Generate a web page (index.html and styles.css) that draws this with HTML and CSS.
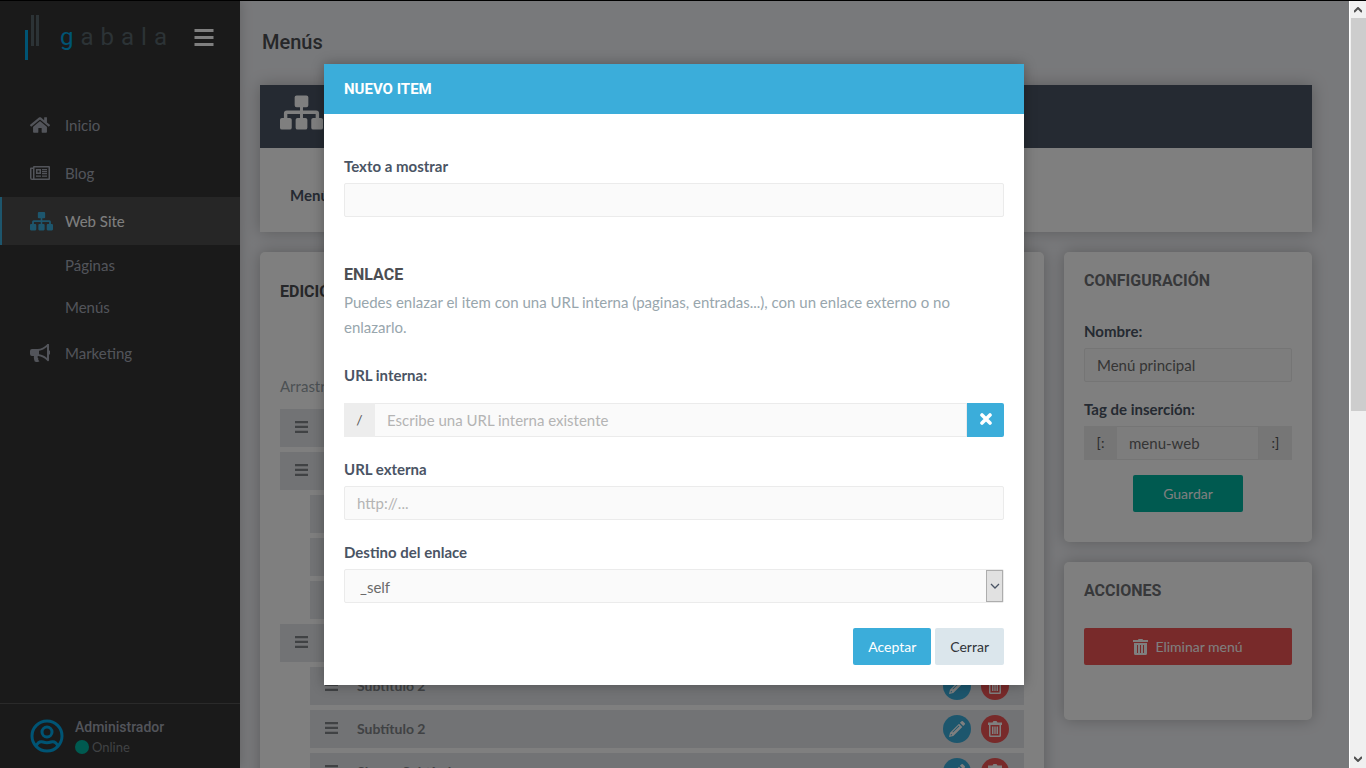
FILE: index.html
```html
<!DOCTYPE html>
<html lang="es">
<head>
  <meta charset="UTF-8">
  <meta name="viewport" content="width=device-width, initial-scale=1.0">
  <title>Gabala - Menús</title>
  <link rel="stylesheet" href="styles.css">
</head>
<body>

<!-- Iconos -->
<svg class="sprite" width="0" height="0">
  <symbol id="i-bars" viewBox="0 0 20 17"><path d="M.5 0h19v3H.5zM.5 7h19v3H.5zM.5 14h19v3H.5z"/></symbol>
  <symbol id="i-drag" viewBox="0 0 13 12"><path d="M0 0h13v2.300H0zM0 4.800h13v2.300H0zM0 9.700h13V12H0z"/></symbol>
  <symbol id="i-home" viewBox="0 0 576 512"><path d="M488 312.700V456c0 13.300-10.700 24-24 24H348c-6.600 0-12-5.400-12-12V356c0-6.600-5.400-12-12-12h-72c-6.600 0-12 5.400-12 12v112c0 6.600-5.400 12-12 12H112c-13.300 0-24-10.700-24-24V312.700c0-3.600 1.600-7 4.400-9.300l188-154.800c4.400-3.600 10.800-3.600 15.300 0l188 154.800c2.700 2.300 4.300 5.700 4.300 9.300zM571.600 251.500L488 182.600V44.100c0-6.600-5.400-12-12-12h-56c-6.600 0-12 5.400-12 12v72.600l-89.500-73.700c-17.700-14.600-43.300-14.600-61 0L4.400 251.500c-5.100 4.200-5.800 11.800-1.600 16.900l25.500 31c4.200 5.100 11.800 5.800 16.900 1.600l235.200-193.700c4.400-3.600 10.800-3.600 15.300 0L530.900 301c5.100 4.200 12.700 3.500 16.900-1.600l25.500-31c4.200-5.200 3.400-12.700-1.700-16.900z"/></symbol>
  <symbol id="i-news" viewBox="0 0 20 14"><path fill-rule="evenodd" d="M4 0h15a1 1 0 0 1 1 1v12a1 1 0 0 1-1 1H2a2 2 0 0 1-2-2V2.500a1 1 0 0 1 1-1h2V1a1 1 0 0 1 1-1zM4.500 1.500v11h14v-11zM1.500 3v9a.7.7 0 0 0 1.500 0V3zM6 3h5v5H6zM7.500 4.500v2h2v-2zM12 3h5v1.300h-5zM12 5h5v1.300h-5zM12 7h5v1.300h-5zM6 9.500h5v1.300H6zM12 9.500h5v1.300h-5z"/></symbol>
  <symbol id="i-sitemap" viewBox="0 0 44 36"><path d="M17 0h10a2 2 0 0 1 2 2v8a2 2 0 0 1-2 2h-3.500v3.500H37a3 3 0 0 1 3 3V23h2a2 2 0 0 1 2 2v8a2 2 0 0 1-2 2h-8a2 2 0 0 1-2-2v-8a2 2 0 0 1 2-2h2.500v-4h-13v4H26a2 2 0 0 1 2 2v8a2 2 0 0 1-2 2h-8a2 2 0 0 1-2-2v-8a2 2 0 0 1 2-2h2.500v-4h-13v4H10a2 2 0 0 1 2 2v8a2 2 0 0 1-2 2H2a2 2 0 0 1-2-2v-8a2 2 0 0 1 2-2h2v-4.500a3 3 0 0 1 3-3h13.500V12H17a2 2 0 0 1-2-2V2a2 2 0 0 1 2-2z"/></symbol>
  <symbol id="i-horn" viewBox="0 0 20 18"><path fill-rule="evenodd" d="M17 .5a1 1 0 0 1 2 .5v5.500a2 2 0 0 1 0 4V16a1 1 0 0 1-2 .5C14.500 14 11.500 12.500 8 12c-1 1 0 2 .5 2.700-.8 1 0 1.700 1 2.500C8 18.300 6 18.200 4.700 17.500 4.200 15.800 3.500 14 4 12H2a2 2 0 0 1-2-2V7a2 2 0 0 1 2-2h5.500C11 5 14.500 3 17 .5zM17 3c-2.500 2-5 3.300-8 3.700v3.600c3 .4 5.500 1.700 8 3.700z"/></symbol>
  <symbol id="i-user" viewBox="0 0 34 34"><g fill="none" stroke="currentColor" stroke-width="3"><circle cx="17" cy="17" r="15"/><circle cx="17" cy="13" r="5"/><path d="M6 27c2-4 4-5 7-4 3 1 5 1 8 0s5 0 7 4"/></g></symbol>
  <symbol id="i-pencil" viewBox="0 0 16 16"><path fill-rule="evenodd" d="M12.300.4a1.300 1.300 0 0 1 1.800 0l1.500 1.500a1.300 1.300 0 0 1 0 1.800l-1.400 1.400-3.300-3.300zM10 2.700l3.300 3.300-9 9L0 16l1-4.300zM2 12.700l-.4 1.700 1.700-.4zM9.800 4.600L3.400 11l.6.600 6.400-6.400z"/></symbol>
  <symbol id="i-trash" viewBox="0 0 14 16"><path fill-rule="evenodd" d="M4.500 1.500L5.500 0h3l1 1.500H14V4h-1v10.500a1.500 1.500 0 0 1-1.500 1.500h-9A1.500 1.500 0 0 1 1 14.500V4H0V1.500zM2.500 4v10.500h9V4zM4 5.500h1.500V13H4zM6.300 5.500h1.400V13H6.300zM8.500 5.500H10V13H8.500z"/></symbol>
  <symbol id="i-bin" viewBox="0 0 15 16"><path fill-rule="evenodd" d="M5 1l.5-1h4l.5 1h5v2H0V1zM1 4h13v10.500a1.500 1.500 0 0 1-1.500 1.500h-10A1.500 1.500 0 0 1 1 14.500zM4 6v8h1V6zM7 6v8h1V6zM10 6v8h1V6z"/></symbol>
  <symbol id="i-times" viewBox="0 0 12 12"><path d="M2 2l8 8M10 2l-8 8" fill="none" stroke="currentColor" stroke-width="3.600" stroke-linecap="round"/></symbol>
  <symbol id="i-down" viewBox="0 0 10 6"><path d="M1 1l4 4 4-4" fill="none" stroke="currentColor" stroke-width="1.300"/></symbol>
  <symbol id="i-arrow" viewBox="0 0 8 6"><path d="M0 5l4-4 4 4" fill="none" stroke="currentColor" stroke-width="2"/></symbol>
</svg>

<div class="window">
  <div class="app">

    <aside class="sidebar">
      <div class="brand">
        <a href="#" class="logo" aria-label="gabala">
          <svg width="14" height="45" viewBox="0 0 14 45"><path class="logo-blue" d="M0 15h3v30H0z"/><path class="logo-gray" d="M6 0h3v31H6zM11 0h3v31h-3z"/></svg>
          <span class="wordmark"><b>g</b><i>a</i><i>b</i><i>a</i><i>l</i><i>a</i></span>
        </a>
        <button class="toggle" type="button" aria-label="Menú"><svg width="20" height="17"><use href="#i-bars"/></svg></button>
      </div>

      <nav class="nav">
        <a href="#"><svg width="20" height="18"><use href="#i-home"/></svg>Inicio</a>
        <a href="#"><svg width="21" height="14"><use href="#i-news"/></svg>Blog</a>
        <a href="#" class="active"><svg width="23" height="19"><use href="#i-sitemap"/></svg>Web Site</a>
        <div class="subnav">
          <a href="#">Páginas</a>
          <a href="#">Menús</a>
        </div>
        <a href="#"><svg width="20" height="18"><use href="#i-horn"/></svg>Marketing</a>
      </nav>

      <div class="user">
        <svg width="34" height="34"><use href="#i-user"/></svg>
        <div>
          <div class="user-name">Administrador</div>
          <div class="user-status"><span class="dot"></span>Online</div>
        </div>
      </div>
    </aside>

    <main class="content">
      <h1>Menús</h1>

      <section class="panel">
        <div class="panel-head"><svg width="43" height="36"><use href="#i-sitemap"/></svg></div>
        <div class="panel-body">Menú</div>
      </section>

      <div class="columns">
        <section class="card editor">
          <h2>Edición</h2>
          <p class="hint">Arrastra</p>
          <ul class="items">
            <li><svg width="13" height="12"><use href="#i-drag"/></svg></li>
            <li><svg width="13" height="12"><use href="#i-drag"/></svg></li>
            <li class="child"></li>
            <li class="child"></li>
            <li class="child"></li>
            <li><svg width="13" height="12"><use href="#i-drag"/></svg></li>
            <li class="child">
              <svg width="13" height="12"><use href="#i-drag"/></svg><span>Subtítulo 2</span>
              <button class="round edit" type="button" aria-label="Editar"><svg width="16" height="16"><use href="#i-pencil"/></svg></button>
              <button class="round delete" type="button" aria-label="Eliminar"><svg width="14" height="16"><use href="#i-trash"/></svg></button>
            </li>
            <li class="child">
              <svg width="13" height="12"><use href="#i-drag"/></svg><span>Subtítulo 2</span>
              <button class="round edit" type="button" aria-label="Editar"><svg width="16" height="16"><use href="#i-pencil"/></svg></button>
              <button class="round delete" type="button" aria-label="Eliminar"><svg width="14" height="16"><use href="#i-trash"/></svg></button>
            </li>
            <li class="child">
              <svg width="13" height="12"><use href="#i-drag"/></svg><span>Siguen Subtítulo</span>
              <button class="round edit" type="button" aria-label="Editar"><svg width="16" height="16"><use href="#i-pencil"/></svg></button>
              <button class="round delete" type="button" aria-label="Eliminar"><svg width="14" height="16"><use href="#i-trash"/></svg></button>
            </li>
          </ul>
        </section>

        <div class="side">
          <section class="card config">
            <h2>Configuración</h2>
            <label for="nombre">Nombre:</label>
            <input type="text" id="nombre" value="Menú principal">
            <label for="tag">Tag de inserción:</label>
            <div class="group">
              <span class="addon">[:</span>
              <input type="text" id="tag" value="menu-web">
              <span class="addon">:]</span>
            </div>
            <button class="btn save" type="button">Guardar</button>
          </section>

          <section class="card actions">
            <h2>Acciones</h2>
            <button class="btn danger" type="button"><svg width="15" height="16"><use href="#i-bin"/></svg>Eliminar menú</button>
          </section>
        </div>
      </div>
    </main>

    <div class="overlay">
      <form class="modal" role="dialog" aria-labelledby="modalTitle">
        <h2 class="modal-head" id="modalTitle">Nuevo item</h2>
        <div class="modal-body">
          <label for="texto">Texto a mostrar</label>
          <input type="text" id="texto">

          <h3>Enlace</h3>
          <p>Puedes enlazar el item con una URL interna (paginas, entradas...), con un enlace externo o no enlazarlo.</p>

          <label for="interna">URL interna:</label>
          <div class="group url">
            <span class="addon">/</span>
            <input type="text" id="interna" placeholder="Escribe una URL interna existente">
            <button class="clear" type="button" aria-label="Borrar"><svg width="12" height="12"><use href="#i-times"/></svg></button>
          </div>

          <label for="externa">URL externa</label>
          <input type="text" id="externa" placeholder="http://...">

          <label for="destino">Destino del enlace</label>
          <div class="select">
            <select id="destino">
              <option>_self</option>
              <option>_blank</option>
            </select>
            <span class="select-arrow"><svg width="10" height="6"><use href="#i-down"/></svg></span>
          </div>

          <div class="modal-buttons">
            <button class="btn primary" type="button">Aceptar</button>
            <button class="btn light" type="button">Cerrar</button>
          </div>
        </div>
      </form>
    </div>
  </div>

  <div class="scrollbar">
    <svg width="8" height="6"><use href="#i-arrow"/></svg>
    <div class="thumb"></div>
    <svg class="down" width="8" height="6"><use href="#i-arrow"/></svg>
  </div>
</div>

</body>
</html>
```
FILE: styles.css
```css
* {
  box-sizing: border-box;
}
body {
  margin: 0;
  font-family: Lato, sans-serif;
  font-size: 15px;
  line-height: 25px;
  color: #4a5464;
}
h1, h2, h3, p, ul {
  margin: 0;
  padding: 0;
}
a {
  color: inherit;
  text-decoration: none;
}
svg {
  display: block;
  flex: none;
  fill: currentColor;
}
button, input, select {
  font: inherit;
  border: 0;
}
button {
  cursor: pointer;
}
.sprite {
  position: absolute;
}
.window {
  display: flex;
  height: 100vh;
  border-top: 1px solid #000;
  overflow: hidden;
}
.app {
  position: relative;
  display: flex;
  flex: 1;
  min-width: 0;
  overflow: hidden;
  background: #f1f2f6;
}

/* Barra lateral */
.sidebar {
  display: flex;
  flex-direction: column;
  flex: none;
  width: 240px;
  height: 100%;
  background: #343434;
  color: #a5a9b4;
  box-shadow: 0 0 12px rgba(0, 0, 0, 0.2);
}
.brand {
  display: flex;
  justify-content: space-between;
  height: 100px;
  padding: 14px 26px 0 25px;
}
.logo {
  display: flex;
  gap: 21px;
  height: 45px;
}
.logo-blue {
  fill: #00a8e8;
}
.logo-gray {
  fill: #58666c;
}
.wordmark {
  display: flex;
  gap: 7px;
  padding-top: 7px;
  font-family: Roboto, sans-serif;
  font-size: 24px;
  line-height: 30px;
}
.wordmark b, .wordmark i {
  font-weight: 400;
  font-style: normal;
  color: #58666c;
}
.wordmark b {
  color: #00a8e8;
}
.toggle {
  align-self: flex-start;
  margin-top: 14px;
  padding: 0;
  background: none;
  color: #fff;
}
.nav a {
  display: flex;
  align-items: center;
  height: 48px;
  padding-left: 30px;
}
.nav svg {
  margin-right: 15px;
}
.nav > a svg {
  width: 20px;
}
.nav .active {
  padding-left: 28px;
  border-left: 2px solid #3badda;
  background: #4c4c4c;
  color: #fff;
}
.nav .active svg {
  width: 23px;
  margin-right: 12px;
  color: #3badda;
}
.nav .subnav a {
  height: 42px;
  padding: 0 0 2px 65px;
}
.user {
  display: flex;
  gap: 11px;
  height: 65px;
  margin-top: auto;
  padding: 13px 0 0 30px;
  border-top: 1px solid #555;
  line-height: 20px;
}
.user > svg {
  margin-top: 2px;
  color: #00a8e8;
}
.user-name {
  font-family: Roboto, sans-serif;
  font-size: 14px;
  font-weight: 500;
}
.user-status {
  display: flex;
  align-items: center;
  gap: 3px;
  font-size: 13px;
  color: #808488;
}
.dot {
  width: 14px;
  height: 14px;
  border-radius: 50%;
  background: #00b4a0;
}

/* Contenido */
.content {
  flex: 1;
  min-width: 0;
  padding: 29px 37px 0 20px;
}
h1 {
  padding-left: 2px;
  font: 500 20px/25px Roboto, sans-serif;
  color: #4c4e52;
}
h2, h3 {
  font: 700 16px/25px Roboto, sans-serif;
  text-transform: uppercase;
  color: #6e7074;
}
.panel, .card {
  background: #fff;
  box-shadow: 0 0 15px rgba(0, 0, 0, 0.25);
}
.panel {
  margin-top: 30px;
}
.panel-head {
  height: 63px;
  padding: 10px 20px;
  background: #4a5464;
  color: #fff;
}
.panel-body {
  height: 84px;
  padding: 35px 30px;
  font-weight: 700;
}
.columns {
  display: grid;
  grid-template-columns: minmax(0, 1fr) 248px;
  align-items: start;
  gap: 20px;
  margin-top: 20px;
}
.card {
  padding: 16px 20px;
  border-radius: 5px;
}
.editor {
  padding: 27px 20px;
}
.editor h2 {
  color: #4c4e52;
}
.hint {
  margin: 70px 0 10px;
  color: #98a2a8;
}
.items {
  display: grid;
  gap: 5px;
  list-style: none;
}
.items li {
  display: flex;
  align-items: center;
  gap: 10px;
  height: 38px;
  padding: 0 15px;
  background: #e4e6ea;
  font-size: 14px;
  font-weight: 700;
  color: #808488;
}
.items .child {
  margin-left: 30px;
}
.items li > svg, .items span {
  margin-bottom: 2px;
}
.items span {
  flex: 1;
  margin-left: 9px;
}
.round {
  display: grid;
  place-items: center;
  width: 28px;
  height: 28px;
  padding: 0;
  border-radius: 50%;
  color: #fff;
}
.edit {
  background: #3badda;
}
.delete {
  background: #f05454;
}
.side {
  display: grid;
  gap: 20px;
}
.config {
  padding-bottom: 30px;
}
.config h2 {
  margin-bottom: 26px;
}

/* Formularios */
label {
  display: block;
  margin-bottom: 4px;
  font-weight: 700;
}
input, select {
  display: block;
  width: 100%;
  height: 34px;
  padding: 0 12px;
  border: 1px solid #ebebeb;
  border-radius: 2px;
  background: #fafafa;
  color: #6a6a6a;
}
input::placeholder {
  color: #b4b4b4;
  opacity: 1;
}
input + label, .group + label {
  margin-top: 15px;
}
.group {
  display: flex;
}
.group input {
  flex: 1;
  min-width: 0;
  border-left: 0;
  border-radius: 0;
}
.addon {
  width: 33px;
  font-size: 14px;
  line-height: 34px;
  text-align: center;
  background: #ededed;
  color: #555;
}
.btn {
  display: block;
  height: 37px;
  padding: 0 15px;
  border-radius: 2px;
  font-size: 14px;
  color: #fff;
}
.save {
  width: 110px;
  margin: 15px auto 0;
  background: #00b4a0;
}
.actions {
  padding-bottom: 55px;
}
.danger {
  display: flex;
  justify-content: center;
  align-items: center;
  gap: 7px;
  width: 100%;
  margin-top: 25px;
  background: #f05454;
}

/* Ventana modal */
.overlay {
  position: absolute;
  inset: 0;
  display: flex;
  justify-content: center;
  align-items: flex-start;
  padding: 63px 1px 0 0;
  background: rgba(0, 0, 0, 0.5);
}
.modal {
  width: 700px;
  max-width: 100%;
  background: #fff;
  box-shadow: 0 0 12px rgba(0, 0, 0, 0.3);
}
.modal-head {
  padding: 0 20px;
  font-size: 15px;
  line-height: 50px;
  background: #3badda;
  color: #fff;
}
.modal-body {
  padding: 40px 20px 20px;
}
.modal h3 {
  margin-top: 45px;
  margin-bottom: 3px;
  color: #4c4e52;
}
.modal p {
  margin-bottom: 23px;
  color: #98a6ad;
}
.modal p + label {
  margin-bottom: 15px;
}
.modal input + label, .modal .group + label {
  margin-top: 20px;
}
.url .addon {
  width: 31px;
}
.clear {
  display: grid;
  place-items: center;
  width: 37px;
  padding: 0 0 2px;
  border-radius: 0 2px 2px 0;
  background: #3badda;
  color: #fff;
}
.select {
  position: relative;
}
select {
  padding: 3px 15px 0;
  appearance: none;
}
.select-arrow {
  position: absolute;
  top: 1px;
  right: 1px;
  bottom: 1px;
  display: grid;
  place-items: center;
  width: 17px;
  border: 1px solid #adadad;
  background: #e1e1e1;
  pointer-events: none;
}
.modal-buttons {
  display: flex;
  justify-content: flex-end;
  gap: 4px;
  margin-top: 25px;
}
.primary {
  background: #3badda;
}
.light {
  background: #dbe6ec;
  color: #303438;
}

/* Barra de desplazamiento */
.scrollbar {
  display: flex;
  flex-direction: column;
  align-items: center;
  flex: none;
  width: 17px;
  padding: 6px 0;
  border-left: 1px solid #fff;
  background: #f0f0f0;
  color: #505050;
}
.thumb {
  width: 15px;
  height: 52%;
  margin-top: 5px;
  background: #cdcdcd;
}
.down {
  margin-top: auto;
  transform: rotate(180deg);
}
```
